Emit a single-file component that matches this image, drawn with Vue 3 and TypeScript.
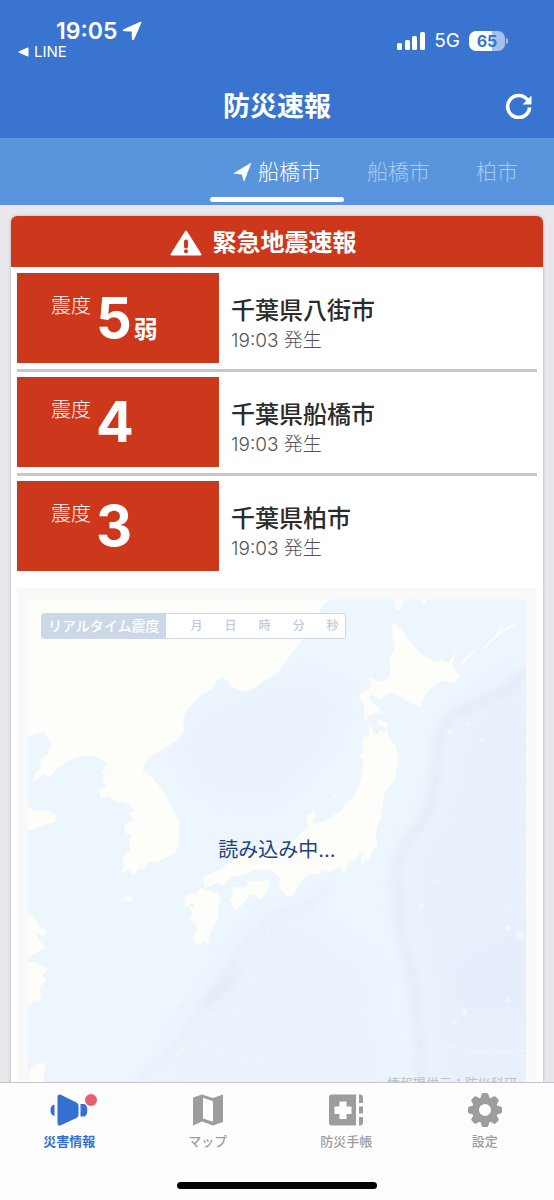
<script setup lang="ts">
import { ref } from 'vue'

interface Area { id: number; name: string; current: boolean }
interface Quake { id: number; level: string; suffix: string; place: string; time: string }
type Icon = 'horn' | 'map' | 'book' | 'gear'
interface NavItem { icon: Icon; label: string; badge: boolean }

const areas: Area[] = [
  { id: 0, name: '船橋市', current: true },
  { id: 1, name: '船橋市', current: false },
  { id: 2, name: '柏市', current: false },
]
const quakes: Quake[] = [
  { id: 0, level: '5', suffix: '弱', place: '千葉県八街市', time: '19:03' },
  { id: 1, level: '4', suffix: '', place: '千葉県船橋市', time: '19:03' },
  { id: 2, level: '3', suffix: '', place: '千葉県柏市', time: '19:03' },
]
const navItems: NavItem[] = [
  { icon: 'horn', label: '災害情報', badge: true },
  { icon: 'map', label: 'マップ', badge: false },
  { icon: 'book', label: '防災手帳', badge: false },
  { icon: 'gear', label: '設定', badge: false },
]
const units: string[] = ['月', '日', '時', '分', '秒']
const activeArea = ref<number>(0)
const activeNav = ref<Icon>('horn')
</script>

<template>
  <div class="app">
    <header class="top">
      <div class="status">
        <div class="status-left">
          <div class="clock">
            <span>19:05</span>
            <svg class="clock-arrow" viewBox="0 0 20 20" aria-hidden="true">
              <path d="M18.200.8 1.600 8.200c-1.300.6-.9 2 .4 2.100l7.700.2.2 7.500c.1 1.300 1.600 1.700 2.200.4L19.300 2C19.700 1 19 .4 18.200.8z" fill="currentColor" />
            </svg>
          </div>
          <button class="back" type="button">
            <svg viewBox="0 0 11 10" aria-hidden="true"><path d="M10 .8v8.400L.8 5z" fill="currentColor" stroke="currentColor" stroke-linejoin="round" /></svg>
            LINE
          </button>
        </div>
        <div class="status-right">
          <svg class="signal" viewBox="0 0 28 18" aria-hidden="true">
            <g fill="currentColor">
              <rect x="0" y="11" width="5" height="7" rx="1.500" />
              <rect x="8" y="8" width="5" height="10" rx="1.500" />
              <rect x="15" y="4" width="5" height="14" rx="1.500" />
              <rect x="23" y="0" width="5" height="18" rx="1.500" />
            </g>
          </svg>
          <span class="network">5G</span>
          <span class="battery"><span class="cell">65</span><span class="tip"></span></span>
        </div>
      </div>
      <div class="titlebar">
        <h1>防災速報</h1>
        <button class="refresh" type="button" aria-label="更新">
          <svg viewBox="0 0 28 28" aria-hidden="true">
            <path d="M22.500 9A11 11 0 1 0 24.600 16.500" fill="none" stroke="currentColor" stroke-width="3.600" />
            <path d="M26.500 4.500v9H17.500z" fill="currentColor" />
          </svg>
        </button>
      </div>
    </header>

    <nav class="areas" aria-label="地域">
      <button
        v-for="area in areas" :key="area.id" type="button"
        class="area" :class="{ active: activeArea === area.id }"
        @click="activeArea = area.id"
      >
        <svg v-if="area.current" viewBox="0 0 19 20" aria-hidden="true">
          <path d="M18.500.5 0 11.500l8.800.9L11 20z" fill="currentColor" />
        </svg>
        {{ area.name }}
      </button>
    </nav>

    <main class="content">
      <section class="card">
        <h2 class="alert">
          <svg viewBox="0 0 32 26" aria-hidden="true">
            <path d="M16 1.500 30.500 24.500h-29z" fill="currentColor" stroke="currentColor" stroke-width="2" stroke-linejoin="round" />
            <path d="M16 11.500v5" stroke="#cd371c" stroke-width="4" stroke-linecap="round" />
            <circle cx="16" cy="21.300" r="2" fill="#cd371c" />
          </svg>
          緊急地震速報
        </h2>
        <ul class="quakes">
          <li v-for="quake in quakes" :key="quake.id" class="quake">
            <div class="scale">
              <span class="scale-label">震度</span>
              <span class="level">{{ quake.level }}</span>
              <span v-if="quake.suffix" class="suffix">{{ quake.suffix }}</span>
            </div>
            <div class="detail">
              <h3>{{ quake.place }}</h3>
              <p>{{ quake.time }} 発生</p>
            </div>
          </li>
        </ul>

        <div class="panel">
          <div class="map">
            <svg class="chart" viewBox="28 599 498 498" aria-hidden="true">
              <defs>
                <filter id="soft" x="-30%" y="-30%" width="160%" height="160%"><feGaussianBlur stdDeviation="16" /></filter>
                <filter id="soft-line" x="-30%" y="-30%" width="160%" height="160%"><feGaussianBlur stdDeviation="4" /></filter>
              </defs>
              <rect x="28" y="599" width="498" height="498" fill="#edf5fd" />
              <g filter="url(#soft)">
                <path d="M205 710 300 680 345 690 320 750 270 800 205 790 180 750z" fill="#e9f1fc" />
                <path d="M540 660 455 720 440 800 410 850 402 900 425 1000 430 1110H550z" fill="#e8f0fb" />
                <path d="M280 900 230 960 140 1090 390 1110 370 960z" fill="#eaf2fc" />
                <path d="M460 970 530 930V1010L460 1000z" fill="#e5ecfa" />
              </g>
              <g filter="url(#soft-line)" fill="none" stroke="#e3e9f8" stroke-linecap="round" stroke-linejoin="round">
                <path d="M535 665 500 694 450 716 438 740 436 780 425 820 405 842 396 870 400 930 413 980 420 1040 420 1110" stroke-width="6" />
                <path d="M330 885 310 905 270 916 240 950 200 1010 175 1050 130 1090" stroke-width="3" />
                <path d="M240 968 228 985 206 1005" stroke-width="6" />
              </g>
              <g fill="none" stroke="#f0f5fd" stroke-width="2" stroke-linecap="round" opacity=".7">
                <path d="M207 1012q18 8 36 0M200 1040q28 22 72 16M238 965q18 18 34 28" />
                <path d="M425 1055 450 1045 472 1052 526 1051M440 829l12-9M428 880l12 3M502 907l14 8" />
              </g>
              <g fill="#f1f7fd">
                <circle cx="468" cy="725" r="2" /><circle cx="482" cy="740" r="2" /><circle cx="449" cy="732" r="2" />
                <circle cx="508" cy="928" r="3" /><circle cx="520" cy="934" r="4" /><circle cx="464" cy="1012" r="3" />
                <circle cx="421" cy="906" r="3" /><circle cx="508" cy="1000" r="2" /><circle cx="454" cy="1022" r="3" />
              </g>
              <g fill="#fdfdf9" stroke="#fdfdf9" stroke-width="1" stroke-linejoin="round">
                <path d="M27 598H332L322 606 313 625 302 640 290 655 277 673 265 680 257 686 243 691 232 687 228 680 221 677 216 681 212 688 202 694 190 706 183 716 183 724 184 732 178 739 165 748 148 757 142 770 153 779 162 790 170 805 178 820 179 832 178 845 174 853 165 858 155 862 149 861 145 868 139 868 133 875 129 869 122 873 125 865 123 858 131 850 129 840 133 836 125 832 125 824 134 820 130 814 135 811 128 803 115 800 109 795 101 799 99 790 107 787 103 780 106 774 102 772 107 763 95 756 85 755 70 759 61 765 55 770 50 776 44 774 38 779 33 781 36 772 42 768 40 760 48 755 52 743 44 732 38 733 27 736z" />
                <path d="M27 806 35 812 48 811 56 815 54 822 45 824 36 828 27 831zM27 915 33 916 38 925 45 930 44 936 34 931 38 939 45 947 36 952 27 958zM27 963 35 963 48 969 42 975 46 981 39 987 41 1000 34 1001 27 1006zM30 1069 38 1063 45 1064 43 1075 46 1098H28z" />
                <path d="M121 900 128 896 134 898 131 902z" />
                <path d="M392 625 397 624 401 630 407 638 412 645 419 652 428 659 434 662 441 660 449 663 455 653 452 664 454 670 460 677 454 682 444 680 436 684 428 691 423 698 420 708 416 704 410 703 404 698 392 692 386 694 380 699 372 694 368 697 372 703 377 706 382 712 374 713 368 716 366 720 364 718 365 711 364 704 361 700 360 694 367 690 373 686 369 677 376 681 382 682 389 677 391 669 390 663 392 654 395 649 393 636z" />
                <path d="M370 725 374 733 379 735 380 730 383 733 386 731 384 725 378 726 379 720 387 723 386 730 389 735 391 742 395 745 398 760 395 777 391 785 384 793 383 801 381 810 381 818 377 827 375 837 378 847 373 848 370 857 362 864 361 857 365 852 359 853 356 859 349 862 345 872 342 871 342 864 339 866 331 872 324 870 317 874 310 873 304 878 300 882 296 889 293 895 286 896 283 891 279 887 281 880 278 875 270 870 260 869 253 870 244 875 233 875 228 880 223 885 217 882 211 886 205 887 203 878 212 873 220 870 226 865 233 862 244 855 260 853 268 850 277 850 287 846 297 838 304 831 309 827 306 815 311 814 314 811 315 816 311 822 314 825 327 820 342 810 346 803 354 797 359 788 362 777 364 760 359 757 364 751 362 744 364 737 369 735z" />
                <path d="M202 888 211 892 218 894 221 901 217 908 218 916 213 927 208 938 208 945 205 941 200 945 194 942 193 938 197 930 196 923 190 919 193 912 189 907 195 908 194 902 185 906 186 899 181 899 190 894 195 895z" />
                <path d="M267 879 270 884 267 891 260 900 256 895 250 894 243 903 237 910 232 906 230 900 233 896 233 888 240 887 245 889 250 881 260 882z" />
                <path d="M394 599 396 608 400 610 404 599M420 599 424 605 427 599M176 1055 186 1045M148 1043 158 1034M174 1003 180 1000M196 962 199 959M204 959 206 955M333 796 336 793 333 799" />
                <path d="M461 665 472 653 475 649M483 649 497 635 507 629 517 623M497 635 502 626" fill="none" stroke-width="2" />
              </g>
            </svg>
            <div class="stamp">
              <span class="stamp-label">リアルタイム震度</span>
              <span class="units"><span v-for="unit in units" :key="unit">{{ unit }}</span></span>
            </div>
            <p class="loading" role="status">読み込み中...</p>
            <p class="credit">情報提供元：防災科研</p>
          </div>
        </div>
      </section>
    </main>

    <footer class="bottom">
      <nav class="tabbar" aria-label="メイン">
        <button
          v-for="item in navItems" :key="item.icon" type="button"
          class="tab" :class="{ active: activeNav === item.icon }"
          @click="activeNav = item.icon"
        >
          <span class="icon">
            <svg v-if="item.icon === 'horn'" viewBox="0 0 38 34" aria-hidden="true">
              <g fill="currentColor">
                <path d="M4.500 11.500v11.500C1.500 22.500.5 20 .5 17.200s1-5.200 4-5.700z" />
                <path d="M7.500 4c0-2.200 1.500-3.200 3.300-2.200L26.500 9.500q2 1 2 3v9.500q0 2-2 3L10.800 32.200c-1.800 1-3.300 0-3.300-2.200z" />
                <path d="M30.500 11h4q2.800 1.500 2.800 6.200t-2.800 6.300h-4z" />
              </g>
            </svg>
            <svg v-else-if="item.icon === 'map'" viewBox="0 0 38 34" aria-hidden="true">
              <path fill="currentColor" fill-rule="evenodd" d="M4 4.500 13 1.500 24 5 34 1.500V29L24 32.500 13 28.500 4 32.500zM14 4.800V25.500L24 28.800V8.300z" />
            </svg>
            <svg v-else-if="item.icon === 'book'" viewBox="0 0 38 34" aria-hidden="true">
              <path fill="currentColor" fill-rule="evenodd" d="M5 1.500H29V32.500H5Q2 32.500 2 29.500V4.500Q2 1.500 5 1.500zM12.500 8.500v5H7.500v7.500h5v5h7v-5h5v-7.500h-5V8.500z" />
              <path fill="currentColor" d="M32 1.500h1q3 0 3 3V10h-4zM32 13.500h4v7h-4zM32 24h4v5.500q0 3-3 3h-1z" />
            </svg>
            <svg v-else viewBox="0 0 38 34" aria-hidden="true">
              <g fill="currentColor">
                <path fill-rule="evenodd" d="M19 4a13 13 0 1 0 0 26 13 13 0 0 0 0-26zm0 7a6 6 0 1 1 0 12 6 6 0 0 1 0-12z" />
                <path
                  v-for="turn in 8" :key="turn" :transform="`rotate(${turn * 45} 19 17)`"
                  d="M14 7 15.500 1.500Q15.800 0 17.300 0h3.400q1.500 0 1.800 1.500L24 7z"
                />
              </g>
            </svg>
            <span v-if="item.badge" class="badge"></span>
          </span>
          <span class="tab-label">{{ item.label }}</span>
        </button>
      </nav>
      <div class="home"></div>
    </footer>
  </div>
</template>

<style>
body { margin: 0; }
</style>

<style scoped>
* { box-sizing: border-box; }
.app {
  display: flex;
  flex-direction: column;
  height: 100vh;
  overflow: hidden;
  background: #e8e7ec;
  color: #2b2b2b;
  font-family: Inter, "Noto Sans CJK JP", sans-serif;
}
h1, h2, h3, p, ul { margin: 0; padding: 0; }
button {
  border: 0;
  padding: 0;
  background: none;
  color: inherit;
  font: inherit;
  cursor: pointer;
}
svg { display: block; flex: none; }

.top { flex: none; background: #3874d0; color: #fff; }
.status {
  display: flex;
  justify-content: space-between;
  height: 72px;
  padding: 18px 46px 0 18px;
}
.clock {
  display: flex;
  align-items: center;
  gap: 5px;
  padding-left: 38px;
  font-size: 23px;
  line-height: 26px;
  font-weight: 600;
}
.clock-arrow { width: 20px; height: 20px; }
.back {
  display: flex;
  align-items: center;
  gap: 5px;
  font-size: 15px;
  line-height: 16px;
}
.back svg { width: 11px; height: 10px; }
.status-right { display: flex; align-items: center; gap: 9px; height: 46px; }
.signal { width: 28px; height: 18px; }
.network { font-size: 19px; line-height: 24px; }
.battery { display: flex; align-items: center; gap: 1px; }
.cell {
  width: 36px;
  border-radius: 7px;
  background: linear-gradient(90deg, #fff 65%, #a5c0ea 65%);
  color: #3874d0;
  font-size: 16px;
  line-height: 20px;
  font-weight: 700;
  text-align: center;
}
.tip { width: 2px; height: 6px; border-radius: 0 2px 2px 0; background: #a5c0ea; }
.titlebar {
  display: grid;
  grid-template-columns: 1fr auto 1fr;
  align-items: center;
  height: 66px;
  padding: 0 21px;
}
h1 {
  grid-column: 2;
  padding-top: 3px;
  font-size: 27px;
  line-height: 40px;
  font-weight: 700;
}
.refresh { justify-self: end; }
.refresh svg { width: 28px; height: 28px; }

.areas {
  display: flex;
  flex: none;
  justify-content: flex-end;
  height: 67px;
  padding-right: 13px;
  background: #5994dc;
}
.area {
  display: flex;
  align-items: center;
  gap: 6px;
  padding: 0 23px;
  color: #a9ccf5;
  font-size: 21px;
  line-height: 30px;
  font-weight: 300;
}
.area svg { width: 19px; height: 20px; }
.area.active { position: relative; color: #fff; }
.area.active::after {
  content: "";
  position: absolute;
  right: 0;
  bottom: 3px;
  left: 0;
  height: 5px;
  border-radius: 3px;
  background: #fff;
}

.content { flex: 1; min-height: 0; overflow: hidden; padding: 11px 11px 0; }
.card {
  border-radius: 6px 6px 0 0;
  background: #fff;
  box-shadow: 0 0 3px rgba(60, 60, 90, .35);
}
.alert {
  display: flex;
  align-items: center;
  justify-content: center;
  gap: 11px;
  height: 51px;
  border-radius: 6px 6px 0 0;
  background: #cd371c;
  color: #fff;
  font-size: 24px;
  line-height: 36px;
  font-weight: 700;
  padding: 2px 28px 0 0;
}
.alert svg { width: 32px; height: 26px; }
.quakes { list-style: none; padding: 0 6px; }
.quake {
  display: flex;
  gap: 12px;
  padding: 6px 0;
}
.quake + .quake { padding-top: 5px; border-top: 3px solid #c8c8ca; }
.scale {
  display: flex;
  align-items: baseline;
  gap: 2px;
  width: 202px;
  height: 90px;
  padding-left: 34px;
  background: #cd371c;
  color: #fff;
}
.scale-label {
  align-self: flex-start;
  margin-right: 3px;
  padding-top: 18px;
  font-size: 20px;
  line-height: 30px;
  font-weight: 300;
}
.level { font-size: 56px; line-height: 90px; font-weight: 700; }
.suffix { font-size: 24px; line-height: 30px; font-weight: 700; }
.detail { padding-top: 21px; }
.detail h3 { font-size: 24px; line-height: 34px; font-weight: 500; }
.detail p { color: #555; font-size: 19px; line-height: 26px; font-weight: 300; }

.panel { margin: 11px 6px 0; padding: 11px; background: #f9f9f9; }
.map { position: relative; }
.chart { width: 100%; }
.stamp {
  position: absolute;
  top: 14px;
  left: 13px;
  display: flex;
  overflow: hidden;
  border: 1px solid #ccd8e8;
  border-radius: 3px;
  background: #fff;
  font-size: 14px;
  line-height: 24px;
  font-weight: 500;
}
.stamp-label { padding: 0 6px; background: #ccd8e8; color: #fff; }
.units {
  display: flex;
  justify-content: space-between;
  width: 179px;
  padding: 0 6px 0 25px;
  color: #bccbe0;
  font-size: 12px;
}
.loading {
  position: absolute;
  top: 50%;
  right: 0;
  left: 0;
  margin-top: -13px;
  color: #1b4285;
  font-size: 20px;
  line-height: 30px;
  text-align: center;
}
.credit {
  position: absolute;
  right: 9px;
  bottom: 4px;
  color: #bcc1c8;
  font-size: 13px;
  line-height: 20px;
}

.bottom {
  flex: none;
  border-top: 1px solid #c5c6cc;
  background: #fdfdfd;
  padding-bottom: 11px;
}
.tabbar { display: grid; grid-template-columns: repeat(4, 1fr); padding-top: 10px; }
.tab {
  display: flex;
  flex-direction: column;
  align-items: center;
  color: #9d9d9d;
  font-size: 13px;
  line-height: 20px;
  font-weight: 500;
}
.tab.active { color: #3470cf; font-weight: 700; }
.icon { position: relative; }
.icon svg { width: 38px; height: 34px; }
.tab-label { padding-top: 4px; }
.badge {
  position: absolute;
  top: 1px;
  right: -9px;
  width: 12px;
  height: 12px;
  border-radius: 50%;
  background: #e55f70;
}
.home { width: 36%; height: 7px; margin: 31px auto 0; border-radius: 4px; background: #000; }
</style>
